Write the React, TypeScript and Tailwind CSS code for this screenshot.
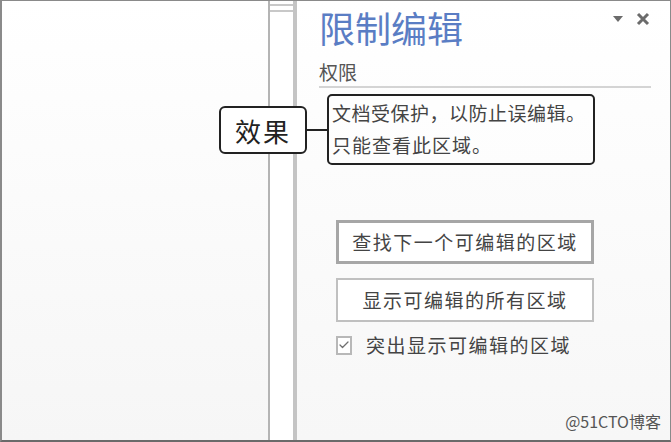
import { Check } from "lucide-react";

const cjk = { fontFamily: '"Noto Sans CJK SC", "Noto Sans", sans-serif' };

export default function App() {
  return (
    <div
      className="w-[671px] h-[442px] flex border border-[#8a8a8a] border-l-2 border-b-2 border-b-[#6a6a6a] bg-white overflow-hidden"
      style={cjk}
    >
      {/* document area */}
      <div className="w-[266px] h-full bg-gradient-to-b from-white to-[#f6f6f6]" />

      {/* scroll bar */}
      <div className="w-[25px] h-full border-l-2 border-[#b4b4b4] bg-white flex flex-col">
        <div className="h-[5px] border-b-2 border-[#c8c8c8]" />
        <div className="mt-[4px] flex-1 border-t-2 border-[#c8c8c8]" />
      </div>
      <div className="w-[4px] h-full border-l-2 border-r-2 border-[#c4c4c4] bg-white" />

      {/* restrict editing pane */}
      <div className="relative flex-1 h-full bg-gradient-to-b from-white to-[#f7f7f7] pl-[22px] pr-[18px]">
        <div className="flex items-start justify-between">
          <h1 className="mt-[2px] text-[36px] leading-[48px] text-[#5a7dc4]">限制编辑</h1>
          <div className="flex items-center gap-[12px] mt-[11px] mr-[2px]">
            <svg width="12" height="8" viewBox="0 0 12 8">
              <path d="M1 1h10L6 7z" fill="#6b6b6b" />
            </svg>
            <svg width="14" height="14" viewBox="0 0 14 14">
              <path d="M2 2l10 10M12 2L2 12" stroke="#6b6b6b" strokeWidth="3" />
            </svg>
          </div>
        </div>
        <div className="mt-[9px] text-[19px] leading-[24px] text-[#555] border-b-2 border-[#d4d4d4] pb-[2px] mr-[1px]">
          权限
        </div>

        {/* highlighted description */}
        <div className="mt-[6px] ml-[8px] w-[268px] h-[71px] border-2 border-[#222] rounded-[5px] pl-[3px] pt-[1px] text-[19px] leading-[32px] text-[#444] bg-white/40 tracking-[1px] whitespace-nowrap">
          <div className="tracking-[0.5px]">文档受保护，以防止误编辑。</div>
          <div>只能查看此区域。</div>
        </div>

        <div className="ml-[17px] mt-[55px] w-[258px] flex flex-col">
          <button className="h-[44px] border-[3px] border-[#a6a6a6] bg-white text-[19px] tracking-[1.5px] text-[#444]">
            查找下一个可编辑的区域
          </button>
          <button className="mt-[14px] h-[44px] border-2 border-[#c0c0c0] bg-white text-[19px] tracking-[1.5px] text-[#444]">
            显示可编辑的所有区域
          </button>
          <label className="mt-[9px] flex items-center gap-[14px] text-[19px] tracking-[1.5px] text-[#444]">
            <span className="w-[16px] h-[19px] border-2 border-[#b8b8b8] bg-white flex items-center justify-center">
              <Check size={14} strokeWidth={2.5} color="#6f6f6f" />
            </span>
            突出显示可编辑的区域
          </label>
        </div>

        <div className="absolute right-[9px] bottom-[7px] text-[16px] text-[#555]">@51CTO博客</div>
      </div>

      {/* callout label */}
      <div className="absolute left-[219px] top-[106px] flex items-center">
        <div className="w-[88px] h-[48px] border-2 border-[#222] rounded-[6px] bg-white flex items-center justify-center text-[26px] text-[#222] tracking-[2px]">
          效果
        </div>
        <div className="w-[21px] h-[2px] bg-[#222]" />
      </div>
    </div>
  );
}
